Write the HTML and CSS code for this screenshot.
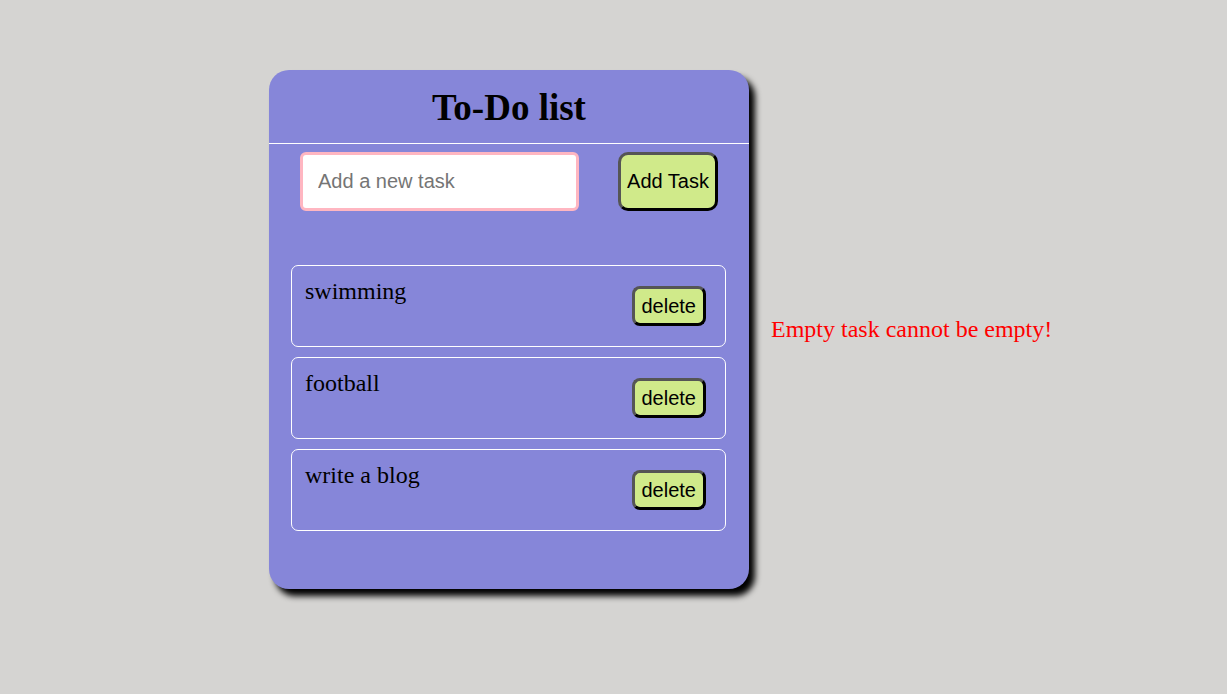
FILE: index.html
```html
<!DOCTYPE html>
<html>
<head>
<meta charset="utf-8">
<title>To-Do list</title>
<link rel="stylesheet" href="styles.css">
</head>
<body>
<div class="page">
  <div class="card">
    <div class="header">
      <h1 class="title">To-Do list</h1>
    </div>
    <div class="add-row">
      <input class="task-input" type="text" placeholder="Add a new task">
      <button class="add-btn">Add Task</button>
    </div>
    <ul class="tasks">
      <li class="task"><span class="task-text">swimming</span><button class="del-btn">delete</button></li>
      <li class="task"><span class="task-text">football</span><button class="del-btn">delete</button></li>
      <li class="task"><span class="task-text">write a blog</span><button class="del-btn">delete</button></li>
    </ul>
  </div>
  <p class="error">Empty task cannot be empty!</p>
</div>
</body>
</html>
```

FILE: styles.css
```css
html, body {
  margin: 0;
  padding: 0;
}
body {
  background: #d5d4d2;
  font-family: "Liberation Serif", "Times New Roman", serif;
  height: 694px;
}
.page {
  display: flex;
  align-items: center;
  padding: 70px 0 0 269px;
}
.card {
  width: 480px;
  box-sizing: border-box;
  background: #8686d9;
  border-radius: 20px;
  box-shadow: 6px 7px 6px #000;
  padding-bottom: 58px;
}
.header {
  border-bottom: 1px solid #fff;
  padding: 17px 0 15px;
}
.title {
  margin: 0;
  text-align: center;
  font-size: 37px;
  font-weight: bold;
  line-height: 41px;
}
.add-row {
  display: flex;
  justify-content: space-between;
  align-items: center;
  margin-top: 8px;
  padding: 0 31px;
}
.task-input {
  width: 279px;
  height: 59px;
  box-sizing: border-box;
  border: 3px solid #ffb6c1;
  border-radius: 6px;
  padding: 0 15px;
  font-family: "Liberation Sans", Arial, sans-serif;
  font-size: 20px;
  background: #fff;
  outline: none;
}
.task-input::placeholder {
  color: #757575;
}
.add-btn {
  width: 100px;
  height: 59px;
  box-sizing: border-box;
  padding: 0;
  background: #d0ea8a;
  border: 3px solid;
  border-color: #555 #000 #000 #555;
  border-radius: 10px;
  font-family: "Liberation Sans", Arial, sans-serif;
  font-size: 20px;
  color: #000;
}
.tasks {
  list-style: none;
  margin: 54px 23px 0 22px;
  padding: 0;
}
.task {
  display: flex;
  justify-content: space-between;
  align-items: center;
  height: 82px;
  box-sizing: border-box;
  border: 1px solid #fff;
  border-radius: 7px;
  padding: 0 19px 0 13px;
  margin-bottom: 10px;
}
.task:last-child {
  margin-bottom: 0;
}
.task-text {
  align-self: flex-start;
  padding-top: 12px;
  font-size: 24px;
  line-height: 27px;
}
.del-btn {
  height: 40px;
  box-sizing: border-box;
  padding: 0 7px;
  background: #d0ea8a;
  border: 3px solid;
  border-color: #555 #000 #000 #555;
  border-radius: 8px;
  font-family: "Liberation Sans", Arial, sans-serif;
  font-size: 20px;
  color: #000;
}
.error {
  margin: 0 0 0 22px;
  color: #ff0000;
  font-size: 24px;
}
```
